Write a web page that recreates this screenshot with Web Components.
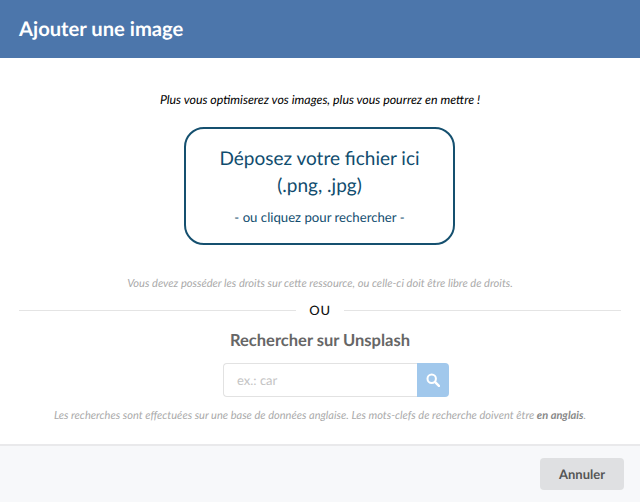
<!DOCTYPE html>
<html lang="fr">
<head>
<meta charset="utf-8">
<title>Ajouter une image</title>
<style>
  html, body { margin: 0; height: 100%; background: #fff; }
  body { font-family: Lato, "Liberation Sans", sans-serif; text-rendering: geometricPrecision; }
</style>
</head>
<body>
<image-modal>
  <span slot="title">Ajouter une image</span>
  <drop-zone></drop-zone>
  <or-divider></or-divider>
  <unsplash-search></unsplash-search>
  <modal-button slot="footer">Annuler</modal-button>
</image-modal>

<script>
class ImageModal extends HTMLElement {
  constructor() {
    super();
    this.attachShadow({ mode: 'open' });
    this.shadowRoot.innerHTML = `
      <style>
        :host { display: flex; flex-direction: column; height: 502px; width: 640px; overflow: hidden; }
        header { flex: none; height: 58px; box-sizing: border-box; padding: 0 19px; display: flex; align-items: center; background: #4c76ab; color: #fff; font-size: 20.2px; font-weight: 700; }
        main { flex: 1; display: flex; flex-direction: column; align-items: stretch; padding: 33px 19px 0; }
        .hint { margin: 0; text-align: center; font-size: 12.4px; line-height: 18px; font-style: italic; color: #000; }
        footer { flex: none; height: 58px; box-sizing: border-box; padding: 0 16px 0 0; display: flex; align-items: center; justify-content: flex-end; background: #f7f8fa; border-top: 2px solid #e9e9eb; }
      </style>
      <header><slot name="title"></slot></header>
      <main>
        <p class="hint">Plus vous optimiserez vos images, plus vous pourrez en mettre !</p>
        <slot></slot>
      </main>
      <footer><slot name="footer"></slot></footer>
    `;
  }
}
customElements.define('image-modal', ImageModal);

class DropZone extends HTMLElement {
  constructor() {
    super();
    this.attachShadow({ mode: 'open' });
    this.shadowRoot.innerHTML = `
      <style>
        :host { display: flex; flex-direction: column; align-items: center; margin-top: 18px; color: #0f4c6e; }
        .box { width: 271px; height: 118px; margin-right: 1px; box-sizing: border-box; border: 2px solid #15506f; border-radius: 20px; display: flex; flex-direction: column; align-items: center; padding-top: 16px; cursor: pointer; }
        .big { font-size: 19px; line-height: 27px; text-align: center; }
        .small { font-size: 13.2px; line-height: 18px; margin-top: 9px; }
        .rights { margin: 30px 0 0; font-size: 11.1px; line-height: 18px; font-style: italic; color: #aaa; text-align: center; }
      </style>
      <div class="box">
        <div class="big">Déposez votre fichier ici<br>(.png, .jpg)</div>
        <div class="small">- ou cliquez pour rechercher -</div>
      </div>
      <p class="rights">Vous devez posséder les droits sur cette ressource, ou celle-ci doit être libre de droits.</p>
    `;
  }
}
customElements.define('drop-zone', DropZone);

class OrDivider extends HTMLElement {
  constructor() {
    super();
    this.attachShadow({ mode: 'open' });
    this.shadowRoot.innerHTML = `
      <style>
        :host { display: flex; align-items: center; gap: 13px; margin-top: 8px; height: 18px; }
        i { flex: 1; height: 1px; background: #e4e4e4; }
        span { font-size: 13px; font-weight: 500; letter-spacing: .8px; color: #111; }
      </style>
      <i></i><span>OU</span><i></i>
    `;
  }
}
customElements.define('or-divider', OrDivider);

class UnsplashSearch extends HTMLElement {
  constructor() {
    super();
    this.attachShadow({ mode: 'open' });
    this.shadowRoot.innerHTML = `
      <style>
        :host { display: flex; flex-direction: column; align-items: center; }
        h2 { margin: 9px 0 0; font-size: 16.5px; line-height: 24px; font-weight: 700; color: #666; }
        .field { display: flex; width: 226px; height: 34px; margin: 11px 0 0 32px; }
        .input { flex: 1; box-sizing: border-box; border: 1px solid #e2e2e2; border-right: 0; border-radius: 4px 0 0 4px; padding: 0 13px; display: flex; align-items: center; font-size: 13px; color: #c4c4c4; }
        button { flex: none; width: 32px; padding: 0 1px 0 0; border: 0; border-radius: 0 4px 4px 0; background: #a1c8ec; display: flex; align-items: center; justify-content: center; }
        .note { margin: 10px 0 0; font-size: 11.05px; line-height: 18px; font-style: italic; color: #aaa; text-align: center; white-space: nowrap; }
        .note b { color: #888; font-weight: 700; }
      </style>
      <h2>Rechercher sur Unsplash</h2>
      <div class="field">
        <div class="input">ex.: car</div>
        <button type="button" aria-label="Rechercher">
          <svg width="14" height="14" viewBox="0 0 13 13" fill="none" stroke="#fff">
            <circle cx="5.3" cy="5.3" r="3.9" stroke-width="1.9"/>
            <path d="M8.3 8.3 L12 12" stroke-width="2.2" stroke-linecap="round"/>
          </svg>
        </button>
      </div>
      <p class="note">Les recherches sont effectuées sur une base de données anglaise. Les mots-clefs de recherche doivent être <b>en anglais</b>.</p>
    `;
  }
}
customElements.define('unsplash-search', UnsplashSearch);

class ModalButton extends HTMLElement {
  constructor() {
    super();
    this.attachShadow({ mode: 'open' });
    this.shadowRoot.innerHTML = `
      <style>
        :host { display: inline-flex; }
        button { width: 84px; height: 32px; border: 0; border-radius: 4px; background: #dfe0e2; color: #555; font: 700 13px Lato, "Liberation Sans", sans-serif; padding: 0; text-rendering: geometricPrecision; }
      </style>
      <button type="button"><slot></slot></button>
    `;
  }
}
customElements.define('modal-button', ModalButton);
</script>
</body>
</html>
